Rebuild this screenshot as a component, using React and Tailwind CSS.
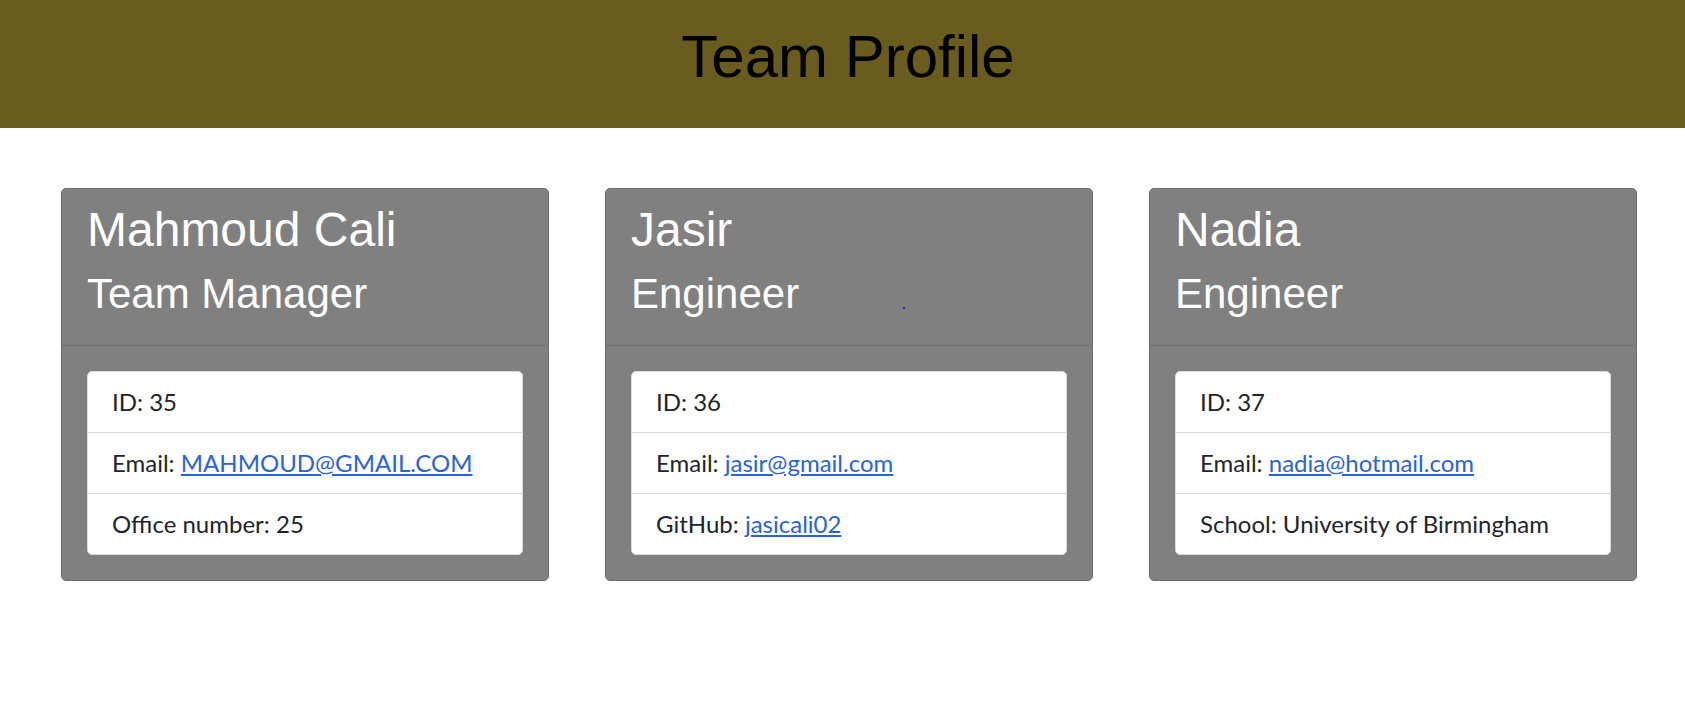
import React from 'react';

const team = [
  {
    name: 'Mahmoud Cali',
    role: 'Team Manager',
    id: 35,
    email: 'MAHMOUD@GMAIL.COM',
    extraLabel: 'Office number',
    extra: '25',
  },
  {
    name: 'Jasir',
    role: 'Engineer',
    id: 36,
    email: 'jasir@gmail.com',
    extraLabel: 'GitHub',
    extra: 'jasicali02',
    link: true,
    dot: true,
  },
  {
    name: 'Nadia',
    role: 'Engineer',
    id: 37,
    email: 'nadia@hotmail.com',
    extraLabel: 'School',
    extra: 'University of Birmingham',
  },
];

const Card = ({ member }) => (
  <div className="w-[488px] shrink-0 rounded-[5px] border border-[#707070] bg-[#808080]">
    <div className="relative border-b border-[#707070] px-[25px] pt-[12px] pb-[26px] text-white font-['Liberation_Sans',Arial,sans-serif]">
      <h1 className="text-[48px] leading-[58px] mb-[10px]">{member.name}</h1>
      <h2 className="text-[42px] leading-[50px]">{member.role}</h2>
      {member.dot && (
        <span className="absolute left-[297px] top-[118px] w-[2px] h-[2px] bg-[#1a1acc]" />
      )}
    </div>
    <div className="p-[25px]">
      <ul className="rounded-[5px] border border-[#dcdcdc] bg-white divide-y divide-[#dcdcdc] text-[#212529] text-[24px] font-['Lato','Open_Sans',sans-serif]">
        <li className="px-[24px] py-[15px] leading-[30px]">ID: {member.id}</li>
        <li className="px-[24px] py-[15px] leading-[30px]">
          Email:{' '}
          <a href={`mailto:${member.email}`} className="text-[#2a64d4] underline">
            {member.email}
          </a>
        </li>
        <li className="px-[24px] py-[15px] leading-[30px]">
          {member.extraLabel}:{' '}
          {member.link ? (
            <a href="#" className="text-[#2a64d4] underline">
              {member.extra}
            </a>
          ) : (
            member.extra
          )}
        </li>
      </ul>
    </div>
  </div>
);

export default function App() {
  return (
    <div className="min-h-screen bg-white">
      <header className="h-[128px] bg-[#695c1e] pt-[23px] pl-[11px] text-center">
        <h1 className="text-[60px] leading-[67px] text-black font-['Liberation_Sans',Arial,sans-serif]">Team Profile</h1>
      </header>
      <main className="flex gap-[56px] pl-[61px] pt-[60px]">
        {team.map((m) => (
          <Card key={m.id} member={m} />
        ))}
      </main>
    </div>
  );
}
